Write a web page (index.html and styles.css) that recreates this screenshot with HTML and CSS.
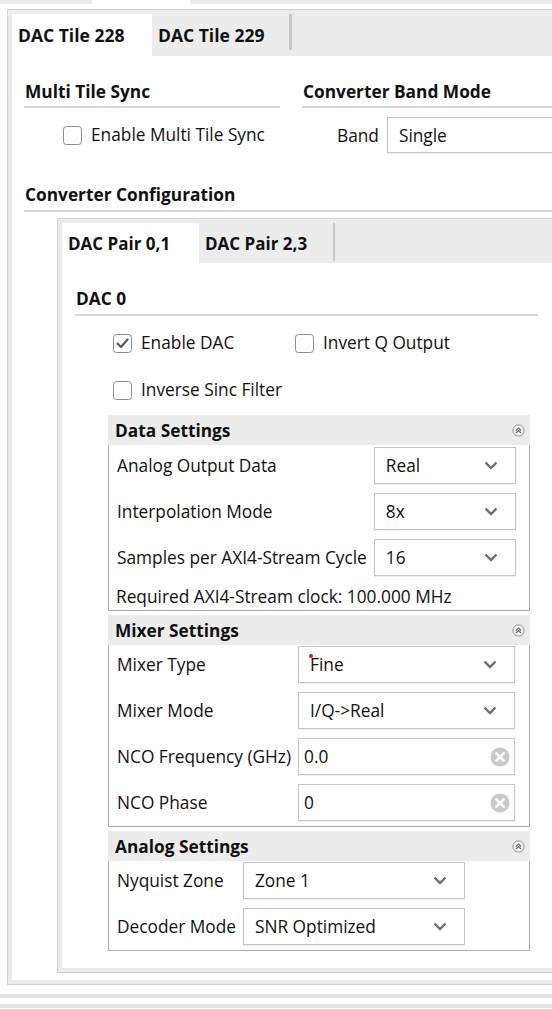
FILE: index.html
```html
<!DOCTYPE html>
<html>
<head>
<meta charset="utf-8">
<link rel="stylesheet" href="styles.css">
</head>
<body>
<div class="topstrip"><span class="ts-a"></span><span class="ts-b"></span><span class="ts-c"></span></div>
<div class="tile-frame">
  <div class="tabbar">
    <div class="tab tile-tab active">DAC Tile 228</div>
    <div class="tab tile-tab">DAC Tile 229</div>
    <div class="tab-sep"></div>
  </div>
  <div class="tile-content">
    <div class="row-two">
      <section class="sync">
        <h2 class="sec-title">Multi Tile Sync</h2>
        <div class="sync-body">
          <label class="cb"><span class="box"></span>Enable Multi Tile Sync</label>
        </div>
      </section>
      <section class="band">
        <h2 class="sec-title">Converter Band Mode</h2>
        <div class="band-body">
          <span class="band-label">Band</span>
          <div class="select band-select"><span>Single</span></div>
        </div>
      </section>
    </div>
    <h2 class="sec-title conv">Converter Configuration</h2>
    <div class="pair-frame">
      <div class="tabbar pair-tabbar">
        <div class="tab pair-tab active">DAC Pair 0,1</div>
        <div class="tab pair-tab">DAC Pair 2,3</div>
        <div class="tab-sep pair-sep"></div>
      </div>
      <div class="pair-content">
        <div class="dac">
          <h3 class="sec-title">DAC 0</h3>
          <div class="cb-rows">
            <div class="cb-row">
              <label class="cb cb-first"><span class="box checked"><svg viewBox="0 0 19 19" width="19" height="19"><polyline points="4.5,9.5 8,13 14.5,5.5" fill="none" stroke="#5a5a5a" stroke-width="2.2" stroke-linecap="round" stroke-linejoin="round"/></svg></span>Enable DAC</label>
              <label class="cb"><span class="box"></span>Invert Q Output</label>
            </div>
            <div class="cb-row second">
              <label class="cb"><span class="box"></span>Inverse Sinc Filter</label>
            </div>
          </div>

          <div class="group data-group">
            <div class="group-head"><span>Data Settings</span><svg class="collapse" viewBox="0 0 12 12" width="13" height="13"><circle cx="6" cy="6" r="5.2" fill="#f2f2f2" stroke="#8c8c8c" stroke-width="0.9"/><polyline points="3.6,6 6,3.8 8.4,6" fill="none" stroke="#6f6f6f" stroke-width="1.1"/><polyline points="3.6,8.3 6,6.1 8.4,8.3" fill="none" stroke="#6f6f6f" stroke-width="1.1"/></svg></div>
            <div class="group-body grid-fill data-body">
              <span class="lbl">Analog Output Data</span>
              <div class="select"><span>Real</span><svg class="chev" viewBox="0 0 14 9" width="14" height="9"><polyline points="1.5,1.5 7,7 12.5,1.5" fill="none" stroke="#6e6e6e" stroke-width="2.4"/></svg></div>
              <span class="lbl">Interpolation Mode</span>
              <div class="select"><span>8x</span><svg class="chev" viewBox="0 0 14 9" width="14" height="9"><polyline points="1.5,1.5 7,7 12.5,1.5" fill="none" stroke="#6e6e6e" stroke-width="2.4"/></svg></div>
              <span class="lbl">Samples per AXI4-Stream Cycle</span>
              <div class="select"><span>16</span><svg class="chev" viewBox="0 0 14 9" width="14" height="9"><polyline points="1.5,1.5 7,7 12.5,1.5" fill="none" stroke="#6e6e6e" stroke-width="2.4"/></svg></div>
              <span class="note">Required AXI4-Stream clock: 100.000 MHz</span>
            </div>
          </div>

          <div class="group mixer-group">
            <div class="group-head"><span>Mixer Settings</span><svg class="collapse" viewBox="0 0 12 12" width="13" height="13"><circle cx="6" cy="6" r="5.2" fill="#f2f2f2" stroke="#8c8c8c" stroke-width="0.9"/><polyline points="3.6,6 6,3.8 8.4,6" fill="none" stroke="#6f6f6f" stroke-width="1.1"/><polyline points="3.6,8.3 6,6.1 8.4,8.3" fill="none" stroke="#6f6f6f" stroke-width="1.1"/></svg></div>
            <div class="group-body grid-fill mixer-body">
              <span class="lbl">Mixer Type</span>
              <div class="select"><span class="dot"></span><span>Fine</span><svg class="chev" viewBox="0 0 14 9" width="14" height="9"><polyline points="1.5,1.5 7,7 12.5,1.5" fill="none" stroke="#6e6e6e" stroke-width="2.4"/></svg></div>
              <span class="lbl">Mixer Mode</span>
              <div class="select"><span>I/Q-&gt;Real</span><svg class="chev" viewBox="0 0 14 9" width="14" height="9"><polyline points="1.5,1.5 7,7 12.5,1.5" fill="none" stroke="#6e6e6e" stroke-width="2.4"/></svg></div>
              <span class="lbl">NCO Frequency (GHz)</span>
              <div class="select input"><span>0.0</span><svg class="clear" viewBox="0 0 20 20" width="20" height="20"><circle cx="10" cy="10" r="9.5" fill="#c9c9c9"/><path d="M6.3 6.3 L13.7 13.7 M13.7 6.3 L6.3 13.7" stroke="#fff" stroke-width="2.6" stroke-linecap="round"/></svg></div>
              <span class="lbl">NCO Phase</span>
              <div class="select input"><span>0</span><svg class="clear" viewBox="0 0 20 20" width="20" height="20"><circle cx="10" cy="10" r="9.5" fill="#c9c9c9"/><path d="M6.3 6.3 L13.7 13.7 M13.7 6.3 L6.3 13.7" stroke="#fff" stroke-width="2.6" stroke-linecap="round"/></svg></div>
            </div>
          </div>

          <div class="group analog-group">
            <div class="group-head"><span>Analog Settings</span><svg class="collapse" viewBox="0 0 12 12" width="13" height="13"><circle cx="6" cy="6" r="5.2" fill="#f2f2f2" stroke="#8c8c8c" stroke-width="0.9"/><polyline points="3.6,6 6,3.8 8.4,6" fill="none" stroke="#6f6f6f" stroke-width="1.1"/><polyline points="3.6,8.3 6,6.1 8.4,8.3" fill="none" stroke="#6f6f6f" stroke-width="1.1"/></svg></div>
            <div class="group-body analog-body">
              <span class="lbl">Nyquist Zone</span>
              <div class="select"><span>Zone 1</span><svg class="chev" viewBox="0 0 14 9" width="14" height="9"><polyline points="1.5,1.5 7,7 12.5,1.5" fill="none" stroke="#6e6e6e" stroke-width="2.4"/></svg></div>
              <span class="lbl">Decoder Mode</span>
              <div class="select"><span>SNR Optimized</span><svg class="chev" viewBox="0 0 14 9" width="14" height="9"><polyline points="1.5,1.5 7,7 12.5,1.5" fill="none" stroke="#6e6e6e" stroke-width="2.4"/></svg></div>
            </div>
          </div>
        </div>
      </div>
    </div>
  </div>
</div>
<div class="bottom-lines"><div class="bl one"></div><div class="bl two"></div></div>
</body>
</html>
```
FILE: styles.css
```css
html, body {
  margin: 0;
  padding: 0;
  overflow: hidden;
  background: #ffffff;
}
body {
  font-family: "Open Sans", "Noto Sans", sans-serif;
  font-size: 17.3px;
  color: #111;
  width: 552px;
  height: 1009px;
}
.topstrip {
  display: flex;
  height: 4px;
  margin-bottom: 5px;
}
.ts-a { width: 92px; background: #ececec; }
.ts-b { width: 98px; background: #ffffff; }
.ts-c { flex: 1; background: #ececec; }

.tile-frame {
  margin-left: 7px;
  width: 620px;
  border: 1px solid #d2d2d2;
  background: #ececec;
  padding: 4px;
}
.tabbar {
  display: flex;
  height: 42px;
  background: #ececec;
}
.tab {
  display: flex;
  align-items: center;
  padding-left: 6px;
  font-weight: 700;
  font-size: 17.5px;
  box-sizing: border-box;
  white-space: nowrap;
}
.tab.active { background: #ffffff; }
.tile-tab { width: 140px; }
.tile-tab + .tile-tab { width: 137px; }
.tab-sep {
  width: 3px;
  height: 36px;
  background: #c9c9c9;
}
.tile-content {
  background: #ffffff;
  padding: 24px 0 7px 12px;
}
.row-two {
  display: flex;
  gap: 22px;
}
.sync { width: 256px; }
.band { flex: 1; }
.sec-title {
  margin: 0;
  font-size: 17.3px;
  font-weight: 700;
  line-height: 24px;
  padding: 0 0 2px 1px;
  border-bottom: 2px solid #d6d6d6;
  white-space: nowrap;
}
.sync-body {
  margin-top: 9px;
  height: 36px;
  display: flex;
  align-items: center;
  padding-left: 39px;
}
.cb {
  display: flex;
  align-items: center;
  font-size: 17.3px;
  line-height: 24px;
  white-space: nowrap;
}
.box {
  width: 17px;
  height: 17px;
  border: 1.5px solid #8e8e8e;
  border-radius: 3.5px;
  background: #fff;
  margin-right: 9px;
  display: flex;
  align-items: center;
  justify-content: center;
  flex: none;
}
.box svg { display: block; flex: none; }
.band-body {
  margin-top: 9px;
  display: flex;
  align-items: center;
  gap: 8px;
  padding-left: 35px;
}
.band-label { font-size: 17.3px; }
.select {
  height: 37px;
  box-sizing: border-box;
  border: 1px solid #c6c6c6;
  box-shadow: 0 1px 1px rgba(0,0,0,0.06);
  background: #fff;
  display: flex;
  align-items: center;
  padding: 0 17px 0 11px;
  font-size: 17.3px;
  position: relative;
  white-space: nowrap;
}
.select > span:first-child, .select > .dot + span { flex: 1; }
.band-select { flex: 1; height: 36px; }
.chev { display: block; flex: none; }
.select.input { padding: 0 4px 0 5px; }
.clear { display: block; flex: none; }
.dot {
  position: absolute;
  left: 10px;
  top: 7px;
  width: 4px;
  height: 4px;
  border-radius: 50%;
  background: #e81010;
}
.conv { margin-top: 30px; padding-bottom: 3px; }

.pair-frame {
  margin: 6px 0 0 33px;
  border: 1px solid #d2d2d2;
  background: #ececec;
  padding: 4px;
}
.pair-tabbar { height: 40px; }
.pair-tab { width: 137px; font-size: 17px; }
.pair-tab + .pair-tab { width: 134px; }
.pair-sep { width: 2px; height: 38px; }
.pair-content {
  background: #fff;
  padding: 24px 0 17px 13px;
}
.dac { width: 463px; }
.dac .sec-title { padding-bottom: 3px; }
.cb-rows { padding-left: 38px; }
.cb-row {
  display: flex;
  margin-top: 15px;
  height: 24px;
}
.cb-row.second { margin-top: 23px; }
.cb-first { width: 182px; }

.group {
  margin-left: 33px;
  width: 422px;
  margin-top: 4px;
}
.data-group { margin-top: 13px; }
.group-head {
  height: 30px;
  background: #ececec;
  display: flex;
  align-items: center;
  justify-content: space-between;
  padding: 0 5px 0 7px;
  font-weight: 700;
  font-size: 17.3px;
}
.collapse { display: block; }
.group-body {
  border: 1px solid #a3abbd;
  border-top: none;
  display: grid;
  align-items: center;
  column-gap: 7px;
  row-gap: 9px;
  padding: 2px 13px 1px 8px;
}
.grid-fill { grid-template-columns: max-content 1fr; }
.lbl { font-size: 17.3px; white-space: nowrap; }
.note {
  grid-column: 1 / 3;
  line-height: 24px;
  margin-left: -1px;
  white-space: nowrap;
}
.mixer-body { padding: 1px 14px 5px 8px; }
.analog-body {
  grid-template-columns: max-content 222px;
  padding: 1px 13px 5px 8px;
}
.bottom-lines { margin-top: 9px; }
.bl { height: 4px; background: #e4e4e4; }
.bl.two { margin-top: 6px; }
```
